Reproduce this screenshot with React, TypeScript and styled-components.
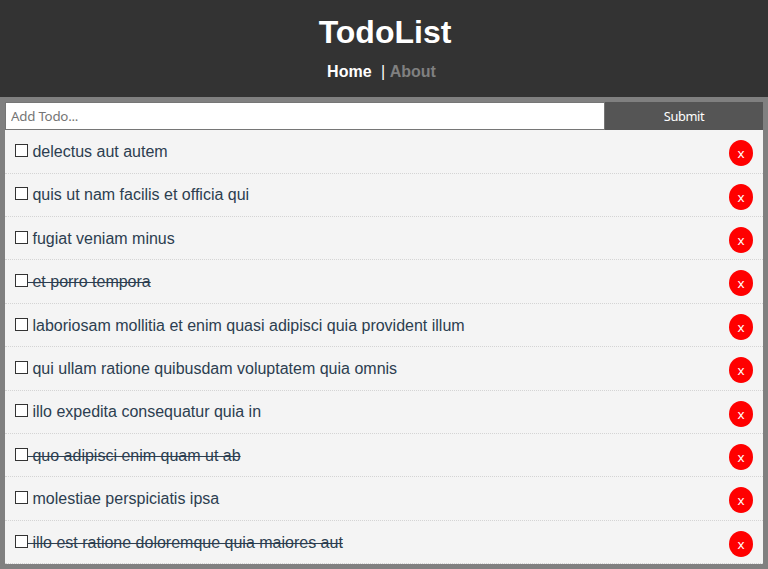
import React, { useState } from "react";
import styled, { createGlobalStyle } from "styled-components";

const GlobalStyle = createGlobalStyle`
  * { box-sizing: border-box; margin: 0; padding: 0; }
  body {
    font-family: "Liberation Sans", Arial, Helvetica, sans-serif;
    font-size: 16px;
    background: #808080;
    overflow: hidden;
  }
`;

const Header = styled.header`
  height: 97px;
  padding-top: 10px;
  background: #333;
  color: #fff;
  text-align: center;
`;

const Title = styled.h1`
  font-size: 32px;
  line-height: 44px;
  padding-left: 2px;
`;

const Nav = styled.nav`
  display: flex;
  justify-content: center;
  padding-right: 5px;
  font-weight: bold;
  line-height: 18px;
  margin-top: 9px;
`;

const NavLink = styled.a<{ $active?: boolean }>`
  color: ${(p) => (p.$active ? "#fff" : "#808080")};
  text-decoration: none;
`;

const Divider = styled.span`
  margin: 0 4.5px 0 9.5px;
  font-weight: normal;
`;

const Main = styled.main`
  padding: 5px;
`;

const Form = styled.form`
  display: flex;
  height: 28.2px;
`;

const TextInput = styled.input`
  flex: 0 0 600px;
  min-width: 0;
  padding: 0 5px;
  border: 1px solid #767676;
  outline: none;
  background: #fff;
  font: 13.333px "Noto Sans", sans-serif;
  letter-spacing: -0.25px;
  &::placeholder { color: #757575; opacity: 1; }
`;

const SubmitButton = styled.button`
  flex: 1;
  border: none;
  background: #555;
  color: #fff;
  font: 12.8px "Noto Sans", sans-serif;
  letter-spacing: -0.4px;
`;

const Item = styled.div`
  display: flex;
  align-items: flex-start;
  height: 43.4px;
  padding: 10px;
  background: #f4f4f4;
  border-bottom: 1px dotted #d4d4d4;
  color: #2c3e50;
`;

const Label = styled.p<{ $done: boolean }>`
  flex: 1;
  padding-top: 1.8px;
  line-height: 19px;
  white-space: pre;
  text-decoration: ${(p) => (p.$done ? "line-through" : "none")};
`;

const Checkbox = styled.input`
  appearance: none;
  width: 13px;
  height: 13px;
  border: 1px solid #333;
  background: #fff;
  vertical-align: 0;
`;

const DeleteButton = styled.button`
  width: 24px;
  height: 26px;
  border: none;
  border-radius: 50%;
  background: #f00;
  color: #fff;
  font: 13.333px/26px "Noto Sans", sans-serif;
`;

const todos = [
  { title: "delectus aut autem", done: false },
  { title: "quis ut nam facilis et officia qui", done: false },
  { title: "fugiat veniam minus", done: false },
  { title: "et porro tempora", done: true },
  { title: "laboriosam mollitia et enim quasi adipisci quia provident illum", done: false },
  { title: "qui ullam ratione quibusdam voluptatem quia omnis", done: false },
  { title: "illo expedita consequatur quia in", done: false },
  { title: "quo adipisci enim quam ut ab", done: true },
  { title: "molestiae perspiciatis ipsa", done: false },
  { title: "illo est ratione doloremque quia maiores aut", done: true },
];

export default function App() {
  const [items, setItems] = useState(todos);
  const [text, setText] = useState("");

  const addTodo = (e: React.FormEvent) => {
    e.preventDefault();
    if (!text.trim()) return;
    setItems([...items, { title: text, done: false }]);
    setText("");
  };

  const toggle = (index: number) =>
    setItems(items.map((t, i) => (i === index ? { ...t, done: !t.done } : t)));

  return (
    <>
      <GlobalStyle />
      <Header>
        <Title>TodoList</Title>
        <Nav>
          <NavLink $active>Home</NavLink>
          <Divider>|</Divider>
          <NavLink>About</NavLink>
        </Nav>
      </Header>
      <Main>
        <Form onSubmit={addTodo}>
          <TextInput
            placeholder="Add Todo..."
            value={text}
            onChange={(e) => setText(e.target.value)}
          />
          <SubmitButton type="submit">Submit</SubmitButton>
        </Form>
        {items.map((todo, i) => (
          <Item key={i}>
            <Label $done={todo.done}>
              <Checkbox type="checkbox" onChange={() => toggle(i)} />
              {" " + todo.title}
            </Label>
            <DeleteButton onClick={() => setItems(items.filter((_, n) => n !== i))}>x</DeleteButton>
          </Item>
        ))}
      </Main>
    </>
  );
}
